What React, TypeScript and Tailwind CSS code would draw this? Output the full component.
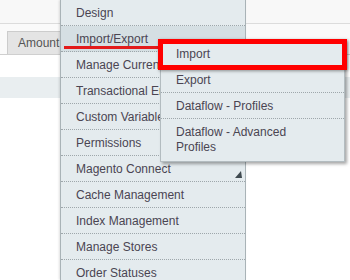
import React from 'react';

const mainItems = [
  'Design',
  'Import/Export',
  'Manage Currency',
  'Transactional Emails',
  'Custom Variables',
  'Permissions',
  'Magento Connect',
  'Cache Management',
  'Index Management',
  'Manage Stores',
  'Order Statuses',
];

const subItems = ['Import', 'Export', 'Dataflow - Profiles', 'Dataflow - Advanced Profiles'];

const Arrow = () => (
  <svg width="7" height="7" viewBox="0 0 7 7" className="absolute right-[3px] top-[15px]">
    <polygon points="0,7 7,7 6,0" fill="#3f4a50" />
  </svg>
);

const App = () => {
  return (
    <div className="relative w-[350px] h-[280px] overflow-hidden bg-white font-['Liberation_Sans',Arial,sans-serif] text-[12px]">
      {/* page behind the menu */}
      <div className="flex flex-col">
        <div className="h-[24px] bg-[#f8f8f8] border-b border-[#dcdcdc]" />
        <div className="flex items-end pl-[7px] pt-[7px] bg-[#fafafa] border-b border-[#cfcfcf]">
          <div className="h-[23px] w-[70px] flex items-center pl-[10px] bg-[#e4e4e4] border border-b-0 border-[#cccccc] text-[#555]">
            Amount
          </div>
        </div>
        <div className="h-[22px]" />
        <div className="h-[21px] bg-[#e9eef0]" />
      </div>

      {/* main dropdown */}
      <div className="absolute left-[60px] top-0 w-[186px] h-[280px] bg-[#e4ebee] border-l border-r border-[#a9b3b7] shadow-[-1px_0_2px_rgba(0,0,0,0.12)]">
        {mainItems.map((item, i) => (
          <div
            key={item}
            className={`relative ${i === 0 ? 'h-[26px]' : 'h-[26px]'} flex items-center pl-[15px] border-b border-dotted border-[#9ea7ab] text-[#4a4552] whitespace-nowrap overflow-hidden ${
              i === 1 ? 'bg-[#d5dfe3]' : ''
            }`}
          >
            {item}
            {item === 'Magento Connect' && <Arrow />}
          </div>
        ))}
      </div>

      {/* submenu */}
      <div className="absolute left-[160px] top-[40px] w-[185px] bg-[#e4ebee] border border-[#b3bcc0] shadow-[2px_2px_3px_rgba(0,0,0,0.35)]">
        {subItems.map((item, i) => (
          <div
            key={item}
            className={`flex items-center pl-[15px] pr-[10px] text-[#4a4552] ${
              i === 3 ? 'py-[6px] leading-[15px]' : 'h-[26px] border-b border-dotted border-[#9ea7ab]'
            }`}
          >
            {i === 3 ? (
              <span>
                Dataflow - Advanced
                <br />
                Profiles
              </span>
            ) : (
              item
            )}
          </div>
        ))}
      </div>

      {/* annotation */}
      <div className="absolute left-[64px] top-[46px] w-[96px] h-[3px] bg-[#e31b1b]" />
      <div className="absolute left-[158px] top-[39px] w-[189px] h-[31px] border-[5px] border-[#ff0000] shadow-[1px_1px_3px_rgba(0,0,0,0.4)]" />
    </div>
  );
};

export default App;
